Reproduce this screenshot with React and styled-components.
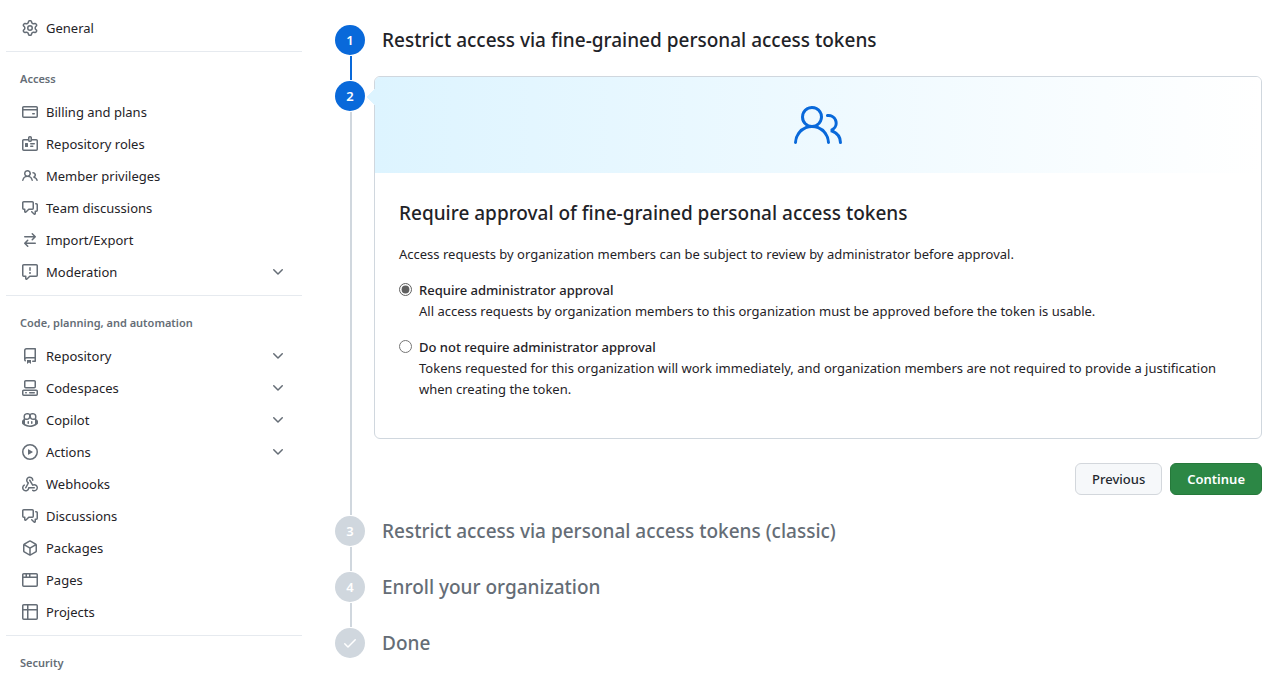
import React from "react";
import styled, { createGlobalStyle } from "styled-components";
import { GoPeople } from "react-icons/go";

const GlobalStyle = createGlobalStyle`
	* {
		box-sizing: border-box;
	}

	body {
		margin: 0;
		background-color: #ffffff;
		color: #1f2328;
		font-family: "Noto Sans", "Open Sans", sans-serif;
		font-size: 13px;
		line-height: 21px;
	}
`;

const Page = styled.div`
	display: flex;
	align-items: flex-start;
	gap: 32px;
	padding: 12px 5px 0px 6px;
	overflow: hidden;
`;

const Sidebar = styled.nav`
	flex: 0 0 296px;
`;

const Section = styled.section`
	& + & {
		margin-top: 7px;
		padding-top: 10px;
		border-top: 1px solid #e6eaef;
	}
`;

const SectionTitle = styled.h2`
	margin: 0px;
	padding: 8px 14px;
	font-size: 11px;
	line-height: 18px;
	font-weight: 600;
	color: #656d76;
`;

const NavList = styled.ul`
	margin: 0px;
	padding: 0px;
	list-style: none;
`;

const NavLink = styled.a`
	display: flex;
	align-items: center;
	gap: 8px;
	height: 32px;
	padding: 0px 16px;
	color: #1f2328;
	text-decoration: none;
`;

const NavLabel = styled.span`
	flex: 1;
`;

const Icon = styled.svg`
	flex: none;
	width: 16px;
	height: 16px;
	fill: ${(props) => props.$color || "#656d76"};
`;

const Main = styled.main`
	flex: 1;
	min-width: 0;
	padding-top: 12px;
`;

const Steps = styled.ol`
	margin: 0px;
	padding: 0px;
	list-style: none;
`;

const Step = styled.li`
	display: flex;
`;

const Track = styled.div`
	display: flex;
	flex-direction: column;
	flex: 0 0 32px;
`;

const Marker = styled.span`
	display: flex;
	align-items: center;
	justify-content: center;
	width: 30px;
	height: 30px;
	margin: 1px;
	border-radius: 50%;
	font-size: 13px;
	font-weight: 600;
	color: #ffffff;
	background-color: ${(props) => (props.$active ? "#0969da" : "#d0d7de")};
`;

const Line = styled.span`
	flex: 1;
	width: 2px;
	min-height: 24px;
	margin-left: 16px;
	background-color: ${(props) => (props.$active ? "#0969da" : "#d0d7de")};
`;

const StepTitle = styled.h3`
	margin: 0px 0px 0px 16px;
	font-size: 19px;
	line-height: 32px;
	font-weight: 500;
	color: ${(props) => (props.$active ? "#1f2328" : "#656d76")};
`;

const StepContent = styled.div`
	flex: 1;
	min-width: 0;
	margin: -4px 0px 20px 8px;
`;

const Card = styled.div`
	position: relative;
	border: 1px solid #d0d7de;
	border-radius: 6px;

	/* caret that points at the current step */
	::before {
		content: "";
		position: absolute;
		top: 12px;
		left: -8px;
		border: 8px solid transparent;
		border-left: none;
		border-right-color: #ddf4ff;
	}
`;

const Banner = styled.div`
	display: flex;
	align-items: center;
	justify-content: center;
	height: 96px;
	border-radius: 5px 5px 0px 0px;
	color: #0969da;
	background-image: linear-gradient(to right, #ddf4ff, #ffffff);
`;

const CardBody = styled.div`
	padding: 24px 24px 38px;
`;

const CardTitle = styled.h3`
	margin: 0px 0px 15px;
	font-size: 19px;
	line-height: 32px;
	font-weight: 500;
`;

const Text = styled.p`
	margin: 0px;
`;

const Options = styled.fieldset`
	margin: 15px 0px 0px;
	padding: 0px;
	border: none;
	display: flex;
	flex-direction: column;
	gap: 15px;
`;

const Option = styled.div`
	display: flex;
	align-items: flex-start;
	gap: 7px;
`;

const Radio = styled.input`
	flex: none;
	width: 13px;
	height: 13px;
	margin: 3px 0px 0px;
	accent-color: #606060;
`;

const OptionLabel = styled.label`
	display: block;
	font-weight: 500;
`;

const Actions = styled.div`
	display: flex;
	justify-content: flex-end;
	gap: 8px;
	margin-top: 24px;
`;

const Button = styled.button`
	height: 32px;
	padding: 0px 16px;
	border: 1px solid ${(props) => (props.$primary ? "#26793b" : "#d3d7dc")};
	border-radius: 6px;
	font-family: inherit;
	font-size: 13px;
	font-weight: ${(props) => (props.$primary ? 600 : 500)};
	color: ${(props) => (props.$primary ? "#ffffff" : "#24292f")};
	background-color: ${(props) => (props.$primary ? "#2c8745" : "#f6f8fa")};
	cursor: pointer;
`;

const paths = {
	gear: "M8 0a8.2 8.2 0 0 1 .701.031C9.444.095 9.99.645 10.16 1.29l.288 1.107c.018.066.079.158.212.224.231.114.454.243.668.386.123.082.233.09.299.071l1.103-.303c.644-.176 1.392.021 1.82.63.27.385.506.792.704 1.218.315.675.111 1.422-.364 1.891l-.814.806c-.049.048-.098.147-.088.294.016.257.016.515 0 .772-.01.147.038.246.088.294l.814.806c.475.469.679 1.216.364 1.891a7.977 7.977 0 0 1-.704 1.217c-.428.61-1.176.807-1.82.63l-1.102-.302c-.067-.019-.177-.011-.3.071a5.909 5.909 0 0 1-.668.386c-.133.066-.194.158-.211.224l-.29 1.106c-.168.646-.715 1.196-1.458 1.26a8.006 8.006 0 0 1-1.402 0c-.743-.064-1.289-.614-1.458-1.26l-.289-1.106c-.018-.066-.079-.158-.212-.224a5.738 5.738 0 0 1-.668-.386c-.123-.082-.233-.09-.299-.071l-1.103.303c-.644.176-1.392-.021-1.82-.63a8.12 8.12 0 0 1-.704-1.218c-.315-.675-.111-1.422.363-1.891l.815-.806c.05-.048.098-.147.088-.294a6.214 6.214 0 0 1 0-.772c.01-.147-.038-.246-.088-.294l-.815-.806C.635 6.045.431 5.298.746 4.623a7.92 7.92 0 0 1 .704-1.217c.428-.61 1.176-.807 1.82-.63l1.102.302c.067.019.177.011.3-.071.214-.143.437-.272.668-.386.133-.066.194-.158.211-.224l.29-1.106C6.009.645 6.556.095 7.299.03 7.53.01 7.764 0 8 0Zm-.571 1.525c-.036.003-.108.036-.137.146l-.289 1.105c-.147.561-.549.967-.998 1.189-.173.086-.34.183-.5.29-.417.278-.97.423-1.529.27l-1.103-.303c-.109-.03-.175.016-.195.045-.22.312-.412.644-.573.99-.014.031-.021.11.059.19l.815.806c.411.406.562.957.53 1.456a4.709 4.709 0 0 0 0 .582c.032.499-.119 1.05-.53 1.456l-.815.806c-.081.08-.073.159-.059.19.162.346.353.677.573.989.02.03.085.076.195.046l1.102-.303c.56-.153 1.113-.008 1.53.27.161.107.328.204.501.29.447.222.85.629.997 1.189l.289 1.105c.029.109.101.143.137.146a6.6 6.6 0 0 0 1.142 0c.036-.003.108-.036.137-.146l.289-1.105c.147-.561.549-.967.998-1.189.173-.086.34-.183.5-.29.417-.278.97-.423 1.529-.27l1.103.303c.109.029.175-.016.195-.045.22-.313.411-.644.573-.99.014-.031.021-.11-.059-.19l-.815-.806c-.411-.406-.562-.957-.53-1.456a4.709 4.709 0 0 0 0-.582c-.032-.499.119-1.05.53-1.456l.815-.806c.081-.08.073-.159.059-.19a6.464 6.464 0 0 0-.573-.989c-.02-.03-.085-.076-.195-.046l-1.102.303c-.56.153-1.113.008-1.53-.27a4.44 4.44 0 0 0-.501-.29c-.447-.222-.85-.629-.997-1.189l-.289-1.105c-.029-.11-.101-.143-.137-.146a6.6 6.6 0 0 0-1.142 0ZM11 8a3 3 0 1 1-6 0 3 3 0 0 1 6 0ZM9.5 8a1.5 1.5 0 1 0-3.001.001A1.5 1.5 0 0 0 9.5 8Z",
	card: "M10.75 9a.75.75 0 0 0 0 1.5h1.5a.75.75 0 0 0 0-1.5h-1.5ZM0 3.75C0 2.784.784 2 1.75 2h12.5c.966 0 1.75.784 1.75 1.75v8.5A1.75 1.75 0 0 1 14.25 14H1.75A1.75 1.75 0 0 1 0 12.25ZM14.5 6.5h-13v5.75c0 .138.112.25.25.25h12.5a.25.25 0 0 0 .25-.25Zm0-2.75a.25.25 0 0 0-.25-.25H1.75a.25.25 0 0 0-.25.25V5h13Z",
	badge: "M3 7.5a.5.5 0 0 1 .5-.5h2a.5.5 0 0 1 .5.5v3a.5.5 0 0 1-.5.5h-2a.5.5 0 0 1-.5-.5ZM8.75 7h3.5a.75.75 0 0 1 0 1.5h-3.5a.75.75 0 0 1 0-1.5ZM8.75 9.5h2a.75.75 0 0 1 0 1.5h-2a.75.75 0 0 1 0-1.5ZM6 1.75C6 .784 6.784 0 7.75 0h.5C9.216 0 10 .784 10 1.75V3h4.25c.966 0 1.75.784 1.75 1.75v8.5A1.75 1.75 0 0 1 14.25 15H1.75A1.75 1.75 0 0 1 0 13.25v-8.5C0 3.784.784 3 1.75 3H6ZM6 4.5H1.75a.25.25 0 0 0-.25.25v8.5c0 .138.112.25.25.25h12.5a.25.25 0 0 0 .25-.25v-8.5a.25.25 0 0 0-.25-.25H10A1.75 1.75 0 0 1 8.25 6h-.5A1.75 1.75 0 0 1 6 4.5ZM7.75 1.5a.25.25 0 0 0-.25.25v2.5c0 .138.112.25.25.25h.5a.25.25 0 0 0 .25-.25v-2.5a.25.25 0 0 0-.25-.25Z",
	people: "M2 5.5a3.5 3.5 0 1 1 5.898 2.549 5.508 5.508 0 0 1 3.034 4.084.75.75 0 1 1-1.482.235 4 4 0 0 0-7.9 0 .75.75 0 0 1-1.482-.236A5.507 5.507 0 0 1 3.102 8.05 3.493 3.493 0 0 1 2 5.5ZM11 4a3.001 3.001 0 0 1 2.22 5.018 5.01 5.01 0 0 1 2.56 3.012.749.749 0 0 1-.885.954.752.752 0 0 1-.549-.514 3.507 3.507 0 0 0-2.522-2.372.75.75 0 0 1-.574-.73v-.352a.75.75 0 0 1 .416-.672A1.5 1.5 0 0 0 11 5.5.75.75 0 0 1 11 4Zm-5.5-.5a2 2 0 1 0-.001 3.999A2 2 0 0 0 5.5 3.5Z",
	discussion: "M1.75 1h8.5c.966 0 1.75.784 1.75 1.75v5.5A1.75 1.75 0 0 1 10.25 10H7.061l-2.574 2.573A1.458 1.458 0 0 1 2 11.543V10h-.25A1.75 1.75 0 0 1 0 8.25v-5.5C0 1.784.784 1 1.75 1ZM1.5 2.75v5.5c0 .138.112.25.25.25h1a.75.75 0 0 1 .75.75v2.19l2.72-2.72a.749.749 0 0 1 .53-.22h3.5a.25.25 0 0 0 .25-.25v-5.5a.25.25 0 0 0-.25-.25h-8.5a.25.25 0 0 0-.25.25Zm13 2a.25.25 0 0 0-.25-.25h-.5a.75.75 0 0 1 0-1.5h.5c.966 0 1.75.784 1.75 1.75v5.5A1.75 1.75 0 0 1 14.25 12H14v1.543a1.458 1.458 0 0 1-2.487 1.03L9.22 12.28a.749.749 0 0 1 .326-1.275.749.749 0 0 1 .734.215l2.22 2.22v-2.19a.75.75 0 0 1 .75-.75h1a.25.25 0 0 0 .25-.25Z",
	arrows: "M5.22 14.78a.75.75 0 0 0 1.06-1.06L4.56 12h8.69a.75.75 0 0 0 0-1.5H4.56l1.72-1.72a.75.75 0 0 0-1.06-1.06l-3 3a.75.75 0 0 0 0 1.06l3 3Zm5.56-6.5a.75.75 0 1 1-1.06-1.06l1.72-1.72H2.75a.75.75 0 0 1 0-1.5h8.69L9.72 2.28a.75.75 0 0 1 1.06-1.06l3 3a.75.75 0 0 1 0 1.06l-3 3Z",
	report: "M0 1.75C0 .784.784 0 1.75 0h12.5C15.216 0 16 .784 16 1.75v9.5A1.75 1.75 0 0 1 14.25 13H8.06l-2.573 2.573A1.458 1.458 0 0 1 3 14.543V13H1.75A1.75 1.75 0 0 1 0 11.25Zm1.75-.25a.25.25 0 0 0-.25.25v9.5c0 .138.112.25.25.25h2a.75.75 0 0 1 .75.75v2.19l2.72-2.72a.749.749 0 0 1 .53-.22h6.5a.25.25 0 0 0 .25-.25v-9.5a.25.25 0 0 0-.25-.25Zm7 2.25v2.5a.75.75 0 0 1-1.5 0v-2.5a.75.75 0 0 1 1.5 0ZM9 9a1 1 0 1 1-2 0 1 1 0 0 1 2 0Z",
	repo: "M2 2.5A2.5 2.5 0 0 1 4.5 0h8.75a.75.75 0 0 1 .75.75v12.5a.75.75 0 0 1-.75.75h-2.5a.75.75 0 0 1 0-1.5h1.75v-2h-8a1 1 0 0 0-.714 1.7.75.75 0 1 1-1.072 1.05A2.495 2.495 0 0 1 2 11.5Zm10.5-1h-8a1 1 0 0 0-1 1v6.708A2.486 2.486 0 0 1 4.5 9h8ZM5 12.25a.25.25 0 0 1 .25-.25h3.5a.25.25 0 0 1 .25.25v3.25a.25.25 0 0 1-.4.2l-1.45-1.087a.249.249 0 0 0-.3 0L5.4 15.7a.25.25 0 0 1-.4-.2Z",
	codespaces: "M0 11.25c0-.966.784-1.75 1.75-1.75h12.5c.966 0 1.75.784 1.75 1.75v3A1.75 1.75 0 0 1 14.25 16H1.75A1.75 1.75 0 0 1 0 14.25Zm2-9.5C2 .784 2.784 0 3.75 0h8.5C13.216 0 14 .784 14 1.75v5a1.75 1.75 0 0 1-1.75 1.75h-8.5A1.75 1.75 0 0 1 2 6.75Zm1.75-.25a.25.25 0 0 0-.25.25v5c0 .138.112.25.25.25h8.5a.25.25 0 0 0 .25-.25v-5a.25.25 0 0 0-.25-.25Zm-2 9.5a.25.25 0 0 0-.25.25v3c0 .138.112.25.25.25h12.5a.25.25 0 0 0 .25-.25v-3a.25.25 0 0 0-.25-.25ZM7 12.75a.75.75 0 0 1 .75-.75h4.5a.75.75 0 0 1 0 1.5h-4.5a.75.75 0 0 1-.75-.75Zm-4 0a.75.75 0 0 1 .75-.75h.5a.75.75 0 0 1 0 1.5h-.5a.75.75 0 0 1-.75-.75Z",
	copilot: "M7.998 15.035c-4.562 0-7.873-2.914-7.998-3.749V9.338c.085-.628.677-1.686 1.588-2.065.013-.07.024-.143.036-.218.029-.183.06-.384.126-.612-.201-.508-.254-1.084-.254-1.656 0-.87.128-1.769.693-2.484.579-.733 1.494-1.124 2.724-1.261 1.206-.134 2.262.034 2.944.765.05.053.096.108.139.165.044-.057.094-.112.143-.165.682-.731 1.738-.899 2.944-.765 1.23.137 2.145.528 2.724 1.261.566.715.693 1.614.693 2.484 0 .572-.053 1.148-.254 1.656.066.228.098.429.126.612.012.076.024.148.037.218.924.385 1.522 1.471 1.591 2.095v1.872c0 .766-3.351 3.795-8.002 3.795Zm0-1.485c2.28 0 4.584-1.11 5.002-1.433V7.862l-.023-.116c-.49.21-1.075.291-1.727.291-1.146 0-2.059-.327-2.71-.991A3.222 3.222 0 0 1 8 6.303a3.24 3.24 0 0 1-.544.743c-.65.664-1.563.991-2.71.991-.652 0-1.236-.081-1.727-.291l-.023.116v4.255c.419.323 2.722 1.433 5.002 1.433ZM6.762 2.83c-.193-.206-.637-.413-1.682-.297-1.019.113-1.479.404-1.713.7-.247.312-.369.789-.369 1.554 0 .793.129 1.171.308 1.371.162.181.519.379 1.442.379.853 0 1.339-.235 1.638-.54.315-.322.527-.827.617-1.553.117-.935-.037-1.395-.241-1.614Zm4.155-.297c-1.044-.116-1.488.091-1.681.297-.204.219-.359.679-.242 1.614.091.726.303 1.231.618 1.553.299.305.784.54 1.638.54.922 0 1.28-.198 1.442-.379.179-.2.308-.578.308-1.371 0-.765-.123-1.242-.37-1.554-.233-.296-.693-.587-1.713-.7ZM6.25 9.037a.75.75 0 0 1 .75.75v1.501a.75.75 0 0 1-1.5 0V9.787a.75.75 0 0 1 .75-.75Zm4.25.75v1.501a.75.75 0 0 1-1.5 0V9.787a.75.75 0 0 1 1.5 0Z",
	play: "M8 0a8 8 0 1 1 0 16A8 8 0 0 1 8 0ZM1.5 8a6.5 6.5 0 1 0 13 0 6.5 6.5 0 0 0-13 0Zm4.879-2.773 4.264 2.559a.25.25 0 0 1 0 .428l-4.264 2.559A.25.25 0 0 1 6 10.559V5.442a.25.25 0 0 1 .379-.215Z",
	webhook: "M5.5 4.25a2.25 2.25 0 0 1 4.5 0 .75.75 0 0 0 1.5 0 3.75 3.75 0 1 0-6.14 2.889l-2.272 4.258a.75.75 0 0 0 1.324.706L7 7.25a.75.75 0 0 0-.309-1.015A2.25 2.25 0 0 1 5.5 4.25ZM7.364 3.607a.75.75 0 0 1 1.03.257l2.608 4.349a3.75 3.75 0 1 1-.628 6.785.75.75 0 0 1 .752-1.299 2.25 2.25 0 1 0-.033-3.88.75.75 0 0 1-1.03-.256L7.107 4.636a.75.75 0 0 1 .257-1.03ZM2.9 8.776A.75.75 0 0 1 2.625 9.8 2.25 2.25 0 1 0 6 11.75a.75.75 0 0 1 .75-.751h5.5a.75.75 0 0 1 0 1.5H7.425a3.751 3.751 0 1 1-5.55-3.998.75.75 0 0 1 1.024.274Z",
	package: "m8.878.392 5.25 3.045c.54.314.872.89.872 1.514v6.098a1.75 1.75 0 0 1-.872 1.514l-5.25 3.045a1.75 1.75 0 0 1-1.756 0l-5.25-3.045A1.75 1.75 0 0 1 1 11.049V4.951c0-.624.332-1.201.872-1.514L7.122.392a1.75 1.75 0 0 1 1.756 0ZM7.875 1.69l-4.63 2.685L8 7.133l4.755-2.758-4.63-2.685a.248.248 0 0 0-.25 0ZM2.5 5.677v5.372c0 .09.047.171.125.216l4.625 2.683V8.432Zm6.25 8.271 4.625-2.683a.25.25 0 0 0 .125-.216V5.677L8.75 8.432Z",
	browser: "M0 2.75C0 1.784.784 1 1.75 1h12.5c.966 0 1.75.784 1.75 1.75v10.5A1.75 1.75 0 0 1 14.25 15H1.75A1.75 1.75 0 0 1 0 13.25ZM14.5 6h-13v7.25c0 .138.112.25.25.25h12.5a.25.25 0 0 0 .25-.25Zm-6-3.5v2h6V2.75a.25.25 0 0 0-.25-.25ZM5 2.5v2h2v-2Zm-3.25 0a.25.25 0 0 0-.25.25V4.5h2v-2Z",
	table: "M0 1.75C0 .784.784 0 1.75 0h12.5C15.216 0 16 .784 16 1.75v12.5A1.75 1.75 0 0 1 14.25 16H1.75A1.75 1.75 0 0 1 0 14.25ZM6.5 6.5v8h7.75a.25.25 0 0 0 .25-.25V6.5Zm8-1.5V1.75a.25.25 0 0 0-.25-.25H6.5V5Zm-13 1.5v7.75c0 .138.112.25.25.25H5v-8ZM5 5V1.5H1.75a.25.25 0 0 0-.25.25V5Z",
	chevron: "M12.78 5.22a.749.749 0 0 1 0 1.06l-4.25 4.25a.749.749 0 0 1-1.06 0L3.22 6.28a.749.749 0 1 1 1.06-1.06L8 8.939l3.72-3.719a.749.749 0 0 1 1.06 0Z",
	check: "M13.78 4.22a.75.75 0 0 1 0 1.06l-7.25 7.25a.75.75 0 0 1-1.06 0L2.22 9.28a.751.751 0 0 1 .018-1.042.751.751 0 0 1 1.042-.018L6 10.94l6.72-6.72a.75.75 0 0 1 1.06 0Z",
};

const sections = [
	{ items: [{ icon: "gear", label: "General" }] },
	{
		title: "Access",
		items: [
			{ icon: "card", label: "Billing and plans" },
			{ icon: "badge", label: "Repository roles" },
			{ icon: "people", label: "Member privileges" },
			{ icon: "discussion", label: "Team discussions" },
			{ icon: "arrows", label: "Import/Export" },
			{ icon: "report", label: "Moderation", expandable: true },
		],
	},
	{
		title: "Code, planning, and automation",
		items: [
			{ icon: "repo", label: "Repository", expandable: true },
			{ icon: "codespaces", label: "Codespaces", expandable: true },
			{ icon: "copilot", label: "Copilot", expandable: true },
			{ icon: "play", label: "Actions", expandable: true },
			{ icon: "webhook", label: "Webhooks" },
			{ icon: "discussion", label: "Discussions" },
			{ icon: "package", label: "Packages" },
			{ icon: "browser", label: "Pages" },
			{ icon: "table", label: "Projects" },
		],
	},
	{ title: "Security", items: [] },
];

const Octicon = ({ name, color }) => (
	<Icon viewBox="0 0 16 16" aria-hidden="true" $color={color}>
		<path fillRule="evenodd" d={paths[name]} />
	</Icon>
);

const Settings = () => {
	return (
		<Sidebar aria-label="Organization settings">
			{sections.map((section) => (
				<Section key={section.title || "General"}>
					{section.title && (
						<SectionTitle>{section.title}</SectionTitle>
					)}
					<NavList>
						{section.items.map((item) => (
							<li key={item.label}>
								<NavLink href="#">
									<Octicon name={item.icon} />
									<NavLabel>{item.label}</NavLabel>
									{item.expandable && (
										<Octicon name="chevron" />
									)}
								</NavLink>
							</li>
						))}
					</NavList>
				</Section>
			))}
		</Sidebar>
	);
};

const ApprovalStep = () => {
	return (
		<StepContent>
			<Card>
				<Banner>
					<GoPeople size={48} aria-hidden="true" />
				</Banner>
				<CardBody>
					<CardTitle>
						Require approval of fine-grained personal access tokens
					</CardTitle>
					<Text>
						Access requests by organization members can be subject
						to review by administrator before approval.
					</Text>
					<Options aria-label="Administrator approval">
						<Option>
							<Radio
								type="radio"
								name="approval"
								id="approval-required"
								defaultChecked
							/>
							<div>
								<OptionLabel htmlFor="approval-required">
									Require administrator approval
								</OptionLabel>
								<Text>
									All access requests by organization members
									to this organization must be approved before
									the token is usable.
								</Text>
							</div>
						</Option>
						<Option>
							<Radio
								type="radio"
								name="approval"
								id="approval-skipped"
							/>
							<div>
								<OptionLabel htmlFor="approval-skipped">
									Do not require administrator approval
								</OptionLabel>
								<Text>
									Tokens requested for this organization will
									work immediately, and organization members
									are not required to provide a justification
									when creating the token.
								</Text>
							</div>
						</Option>
					</Options>
				</CardBody>
			</Card>
			<Actions>
				<Button type="button">Previous</Button>
				<Button type="button" $primary>
					Continue
				</Button>
			</Actions>
		</StepContent>
	);
};

export default function App() {
	return (
		<>
			<GlobalStyle />
			<Page>
				<Settings />
				<Main>
					<Steps>
						<Step>
							<Track>
								<Marker $active>1</Marker>
								<Line $active />
							</Track>
							<StepTitle $active>
								Restrict access via fine-grained personal access
								tokens
							</StepTitle>
						</Step>
						<Step>
							<Track>
								<Marker $active>2</Marker>
								<Line />
							</Track>
							<ApprovalStep />
						</Step>
						<Step>
							<Track>
								<Marker>3</Marker>
								<Line />
							</Track>
							<StepTitle>
								Restrict access via personal access tokens
								(classic)
							</StepTitle>
						</Step>
						<Step>
							<Track>
								<Marker>4</Marker>
								<Line />
							</Track>
							<StepTitle>Enroll your organization</StepTitle>
						</Step>
						<Step>
							<Track>
								<Marker>
									<Octicon name="check" color="#ffffff" />
								</Marker>
							</Track>
							<StepTitle>Done</StepTitle>
						</Step>
					</Steps>
				</Main>
			</Page>
		</>
	);
}
